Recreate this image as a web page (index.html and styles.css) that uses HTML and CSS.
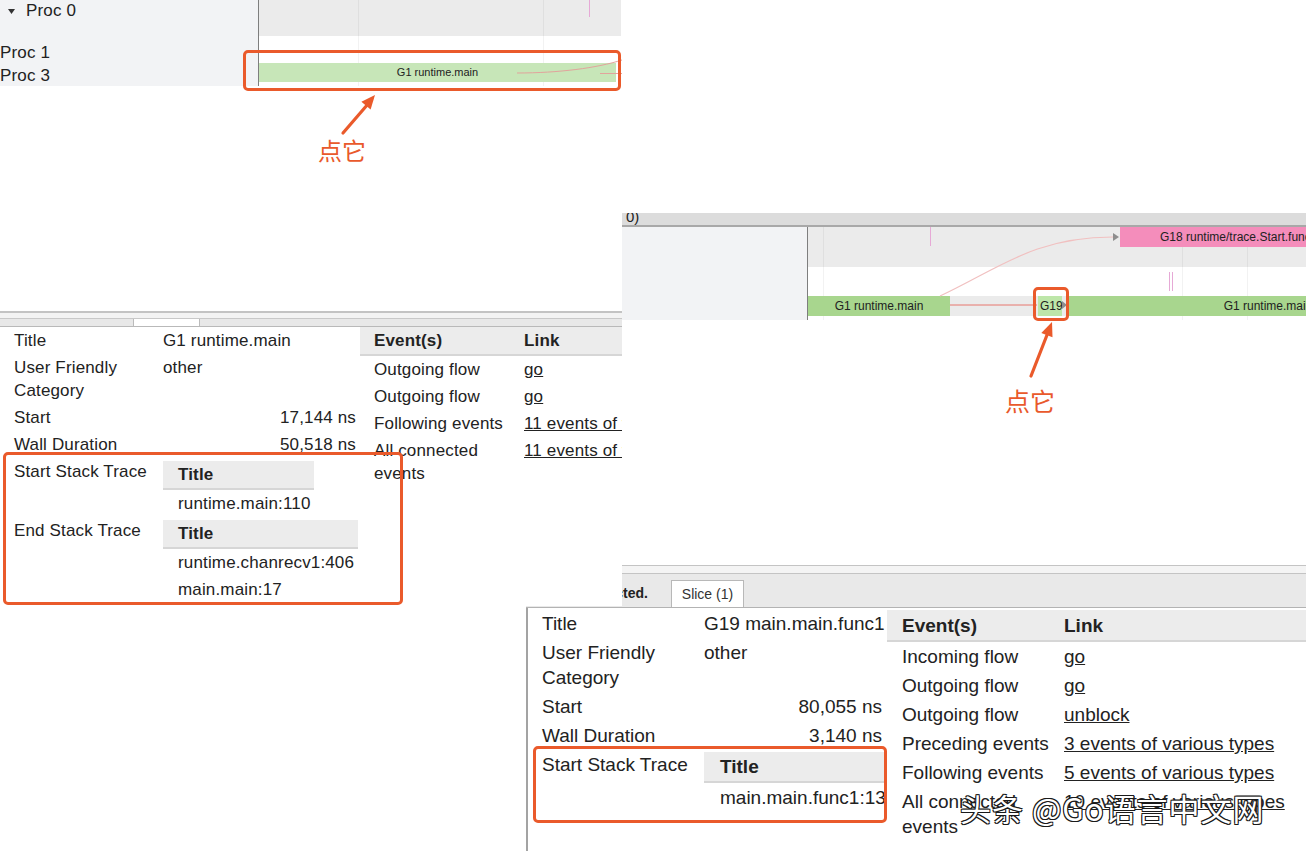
FILE: index.html
```html
<!DOCTYPE html>
<html lang="zh-CN">
<head>
<meta charset="utf-8">
<title>Go trace viewer</title>
<link rel="stylesheet" href="styles.css">
</head>
<body>

<!-- second capture: G19 slice selected -->
<section class="shot shot-b">
  <div class="b-head">0)</div>
  <div class="timeline tl-b">
    <div class="tl-labels"></div>
    <div class="tl-tracks">
      <div class="band"></div>
      <i class="grid" style="left:15px"></i>
      <i class="grid" style="left:374px"></i>
      <i class="grid" style="left:439px"></i>
      <i class="mark" style="left:122px;top:0;height:19px"></i>
      <i class="mark" style="left:361px;top:45px;height:19px"></i>
      <i class="mark" style="left:364px;top:45px;height:19px"></i>
      <div class="slice pink" style="left:312px;top:0;width:200px;height:20px">G18 runtime/trace.Start.func1</div>
      <div class="slice-row row-b">
        <div class="slice green" style="left:0;width:142px">G1 runtime.main</div>
        <div class="slice green-sel" style="left:230px;width:24px">G19</div>
        <div class="slice green" style="left:259px;width:402px">G1 runtime.main</div>
      </div>
      <svg class="flows" width="498" height="93" viewBox="0 0 498 93">
        <path d="M132 69 C 190 42, 226 10, 305 10" fill="none" stroke="#f1c0c0" stroke-width="1.2"/>
        <polygon points="305,6 311,10 305,14" fill="#8e8e8e"/>
        <path d="M142 78 L 229 78" stroke="#e7766f" stroke-width="1"/>
        <polygon points="254,74 259,78 254,82" fill="#8e8e8e"/>
      </svg>
    </div>
  </div>

  <div class="tabbar tabbar-b">
    <div class="tab-gap"></div>
    <div class="tab-strip">
      <span class="sel-note"><span>1 item selected.</span></span>
      <span class="tab">Slice (1)</span>
    </div>
  </div>

  <div class="details details-b">
    <table class="props props-b">
      <colgroup><col class="ck"><col class="cv"></colgroup>
      <tr><td class="k">Title</td><td class="v">G19 main.main.func1</td></tr>
      <tr><td class="k">User Friendly Category</td><td class="v">other</td></tr>
      <tr><td class="k">Start</td><td class="v num">80,055 ns</td></tr>
      <tr><td class="k">Wall Duration</td><td class="v num">3,140 ns</td></tr>
      <tr><td class="k">Start Stack Trace</td><td class="v trace">
        <table class="stack">
          <tr><th>Title</th></tr>
          <tr><td>main.main.func1:13</td></tr>
        </table>
      </td></tr>
    </table>
    <table class="events events-b">
      <colgroup><col class="ce"><col class="cl"></colgroup>
      <tr><th>Event(s)</th><th>Link</th></tr>
      <tr><td>Incoming flow</td><td><a href="#">go</a></td></tr>
      <tr><td>Outgoing flow</td><td><a href="#">go</a></td></tr>
      <tr><td>Outgoing flow</td><td><a href="#">unblock</a></td></tr>
      <tr><td>Preceding events</td><td><a href="#">3 events of various types</a></td></tr>
      <tr><td>Following events</td><td><a href="#">5 events of various types</a></td></tr>
      <tr><td>All connected<br>events</td><td><a href="#">10 events of various types</a></td></tr>
    </table>
  </div>
</section>

<!-- first capture: G1 slice selected -->
<section class="shot shot-a">
  <div class="timeline tl-a">
    <div class="tl-labels">
      <div class="proc-head">
        <svg class="caret" width="7" height="5" viewBox="0 0 7 5"><polygon points="0,0 7,0 3.5,5" fill="#333"/></svg>
        Proc 0
      </div>
      <div class="proc-row first">Proc 1</div>
      <div class="proc-row">Proc 3</div>
    </div>
    <div class="tl-tracks">
      <div class="band"></div>
      <i class="grid" style="left:99px"></i>
      <i class="grid" style="left:284px"></i>
      <i class="mark" style="left:330px;top:0;height:17px"></i>
      <div class="slice-row row-a">
        <div class="slice green-a" style="left:0;width:357px">G1 runtime.main</div>
      </div>
      <svg class="flows" width="363" height="86" viewBox="0 0 363 86">
        <path d="M258 73 C 300 73, 338 68, 363 60" fill="none" stroke="#e2a49c" stroke-width="1"/>
        <path d="M341 73.5 L 363 73.5" stroke="#e2a49c" stroke-width="1"/>
      </svg>
    </div>
  </div>

  <div class="tabbar tabbar-a">
    <div class="tab-gap"></div>
    <div class="tab-strip"><span class="tab"></span></div>
  </div>

  <div class="details details-a">
    <table class="props props-a">
      <colgroup><col class="ck"><col class="cv"></colgroup>
      <tr><td class="k">Title</td><td class="v">G1 runtime.main</td></tr>
      <tr><td class="k">User Friendly Category</td><td class="v">other</td></tr>
      <tr><td class="k">Start</td><td class="v num">17,144 ns</td></tr>
      <tr><td class="k">Wall Duration</td><td class="v num">50,518 ns</td></tr>
      <tr><td class="k">Start Stack Trace</td><td class="v trace">
        <table class="stack">
          <tr><th>Title</th></tr>
          <tr><td>runtime.main:110</td></tr>
        </table>
      </td></tr>
      <tr><td class="k">End Stack Trace</td><td class="v trace">
        <table class="stack">
          <tr><th>Title</th></tr>
          <tr><td>runtime.chanrecv1:406</td></tr>
          <tr><td>main.main:17</td></tr>
        </table>
      </td></tr>
    </table>
    <table class="events events-a">
      <colgroup><col class="ce"><col class="cl"></colgroup>
      <tr><th>Event(s)</th><th>Link</th></tr>
      <tr><td>Outgoing flow</td><td><a href="#">go</a></td></tr>
      <tr><td>Outgoing flow</td><td><a href="#">go</a></td></tr>
      <tr><td>Following events</td><td><a href="#">11 events of various types</a></td></tr>
      <tr><td>All connected<br>events</td><td><a href="#">11 events of various types</a></td></tr>
    </table>
  </div>
</section>

<!-- callouts drawn over the captures -->
<div class="callout-box" style="left:243px;top:50px;width:378px;height:41px"></div>
<div class="callout-box" style="left:3px;top:452px;width:400px;height:153px"></div>
<div class="callout-box" style="left:1033px;top:287px;width:36px;height:34px"></div>
<div class="callout-box" style="left:533px;top:746px;width:354px;height:77px"></div>

<svg class="arrows" width="1306" height="851" viewBox="0 0 1306 851">
  <line x1="343" y1="133" x2="368" y2="104" stroke="#ea5a2b" stroke-width="3.2" stroke-linecap="round"/>
  <polygon points="375,95 370.6,109.6 361.4,101.8" fill="#ea5a2b"/>
  <line x1="1031" y1="376" x2="1047" y2="335" stroke="#ea5a2b" stroke-width="3.2" stroke-linecap="round"/>
  <polygon points="1052,322 1052.5,337.3 1041.3,332.9" fill="#ea5a2b"/>
</svg>

<div class="callout-text tip-a">点它</div>
<div class="callout-text tip-b">点它</div>

<div class="watermark">头条 @Go语言中文网</div>

</body>
</html>
```

FILE: styles.css
```css
* { box-sizing: border-box; }

html, body { margin: 0; padding: 0; }

body {
  width: 1306px;
  height: 851px;
  position: relative;
  overflow: hidden;
  background: #fff;
  font-family: "Liberation Sans", Arial, sans-serif;
  color: #222;
}

/* ---------- capture windows ---------- */
.shot {
  position: absolute;
  overflow: hidden;
  background: #fff;
}

.shot-a {
  left: 0;
  top: 0;
  width: 622px;
  height: 606px;
  z-index: 2;
  font-size: 17px;
  letter-spacing: 0.15px;
}

.shot-b {
  left: 526px;
  top: 213px;
  width: 780px;
  height: 638px;
  z-index: 1;
  font-size: 19px;
}

/* ---------- timeline ---------- */
.timeline { display: flex; }

.tl-labels { background: #f2f3f5; }

.tl-tracks {
  position: relative;
  flex: 1;
  border-left: 1px solid #7e7e7e;
}

.band { background: #ebebeb; }

.grid {
  position: absolute;
  top: 0;
  bottom: 0;
  width: 1px;
  background: rgba(0, 0, 0, 0.05);
}

.mark {
  position: absolute;
  width: 1px;
  background: #e6a9d6;
}

.slice-row { position: relative; }

.slice {
  position: absolute;
  top: 0;
  height: 100%;
  font-size: 12px;
  line-height: 20px;
  letter-spacing: 0;
  text-align: center;
  white-space: nowrap;
  overflow: hidden;
  color: #222;
}

.green { background: #a8d68e; }
.green-sel { background: #bde6a9; text-align: left; padding-left: 2px; }
.green-a { background: #c7e6b8; font-size: 11px; line-height: 19px; }
.pink { background: #f48dbb; text-align: left; padding-left: 40px; }

.flows {
  position: absolute;
  left: 0;
  top: 0;
}

/* first capture */
.tl-a { height: 86px; }
.tl-a .tl-labels { width: 258px; }
.tl-a .band { height: 36px; margin-right: 1px; }
.row-a { margin-top: 27px; height: 19px; }

.proc-head {
  display: flex;
  align-items: center;
  height: 22px;
  padding-left: 8px;
}

.caret { margin-right: 11px; }

.proc-row { line-height: 23px; }
.proc-row.first { margin-top: 19px; }

/* second capture */
.b-head {
  height: 14px;
  background: #dcdcdc;
  border-bottom: 2px solid #a8a8a8;
  padding-left: 100px;
  font-size: 15px;
  line-height: 7px;
  overflow: hidden;
}

.tl-b { height: 93px; }
.tl-b .tl-labels { width: 281px; }
.tl-b .band { height: 40px; }
.row-b { margin-top: 29px; height: 20px; background: #ebebeb; }

/* ---------- tab bars ---------- */
.tabbar-a {
  margin-top: 225px;
  border-top: 2px solid #c3c3c3;
}

.tabbar-a .tab-gap {
  height: 6px;
  background: #f3f3f3;
  border-bottom: 1px solid #c8c8c8;
}

.tabbar-a .tab-strip {
  height: 8px;
  background: #e8e8e8;
  border-bottom: 1px solid #b9b9b9;
  padding-left: 133px;
}

.tabbar-a .tab {
  display: block;
  width: 67px;
  height: 7px;
  background: #fff;
  border-left: 1px solid #bbb;
  border-right: 1px solid #bbb;
}

.tabbar-b {
  margin-top: 245px;
  border-top: 1px solid #c4c4c4;
}

.tabbar-b .tab-gap {
  height: 8px;
  background: #f4f4f4;
  border-bottom: 1px solid #c4c4c4;
}

.tabbar-b .tab-strip {
  display: flex;
  align-items: flex-end;
  height: 34px;
  background: #e9e9e9;
  border-bottom: 1px solid #b3b3b3;
  font-size: 14px;
}

.sel-note {
  display: flex;
  justify-content: flex-end;
  flex: none;
  width: 122px;
  font-weight: bold;
  line-height: 27px;
  white-space: nowrap;
  overflow: hidden;
}

.sel-note span { flex: none; }

.tabbar-b .tab {
  margin-left: 23px;
  width: 73px;
  height: 27px;
  line-height: 26px;
  text-align: center;
  background: #fff;
  border: 1px solid #b8b8b8;
  border-bottom: none;
  color: #333;
}

/* ---------- detail tables ---------- */
.details {
  display: flex;
  align-items: flex-start;
}

.props,
.events {
  border-collapse: collapse;
  table-layout: fixed;
}

.props td {
  vertical-align: top;
  padding: 2px 0;
}

.props td.v { white-space: nowrap; }
.props td.num { text-align: right; }
.props td.trace { padding-bottom: 0; }

.stack { border-collapse: collapse; }

.stack th {
  background: #ececec;
  text-align: left;
  font-weight: bold;
  border-bottom: 2px solid #d6d6d6;
}

.events th {
  background: #ececec;
  text-align: left;
  font-weight: bold;
  border-bottom: 2px solid #d6d6d6;
}

.events td {
  vertical-align: top;
  white-space: nowrap;
}

.events a {
  color: #222;
  text-decoration: underline;
}

/* first capture tables */
.props-a { width: 356px; margin-right: 4px; }
.props-a .ck { width: 163px; }
.props-a .cv { width: 193px; }
.props-a td { line-height: 23px; }
.props-a td.k { padding-left: 14px; }
.props-a .stack { margin-top: 1px; }
.props-a .stack th,
.props-a .stack td { padding: 2px 4px 2px 15px; line-height: 23px; }

.events-a { width: 450px; }
.events-a .ce { width: 150px; }
.events-a .cl { width: 300px; }
.events-a th,
.events-a td { padding: 2px 0 2px 14px; line-height: 23px; }

/* second capture tables */
.details-b {
  border-left: 2px solid #a3a3a3;
  height: 250px;
}

.props-b { width: 354px; margin-top: 1px; }
.props-b .ck { width: 176px; }
.props-b .cv { width: 178px; }
.props-b td { line-height: 25px; }
.props-b td.k { padding-left: 14px; }
.props-b .stack th,
.props-b .stack td { padding: 2px 0 2px 16px; line-height: 25px; }

.events-b { width: 522px; margin-top: 2px; margin-left: 5px; }
.events-b .ce { width: 162px; }
.events-b .cl { width: 360px; }
.events-b th { padding: 3px 0 2px 15px; line-height: 25px; }
.events-b td { padding: 2px 0 2px 15px; line-height: 25px; }

/* ---------- callouts ---------- */
.callout-box {
  position: absolute;
  z-index: 3;
  border: 3px solid #ea5a2b;
  border-radius: 5px;
}

.arrows {
  position: absolute;
  left: 0;
  top: 0;
  z-index: 3;
  pointer-events: none;
}

.callout-text {
  position: absolute;
  z-index: 3;
  color: #e9592c;
  font-family: "Noto Sans CJK SC", "Liberation Sans", sans-serif;
  white-space: nowrap;
}

.tip-a { left: 318px; top: 135px; font-size: 24px; line-height: 30px; }
.tip-b { left: 1005px; top: 385px; font-size: 25px; line-height: 31px; }

.watermark {
  position: absolute;
  z-index: 4;
  left: 960px;
  top: 788px;
  font-family: "Noto Sans CJK SC", "Liberation Sans", sans-serif;
  font-size: 31px;
  line-height: 40px;
  letter-spacing: 1px;
  color: #fff;
  white-space: nowrap;
  text-shadow:
    1px 1px 0 #1a1a1a,
    -1px -1px 0 #1a1a1a,
    1px -1px 0 #1a1a1a,
    -1px 1px 0 #1a1a1a,
    0 1px 0 #1a1a1a,
    0 -1px 0 #1a1a1a;
}
```
